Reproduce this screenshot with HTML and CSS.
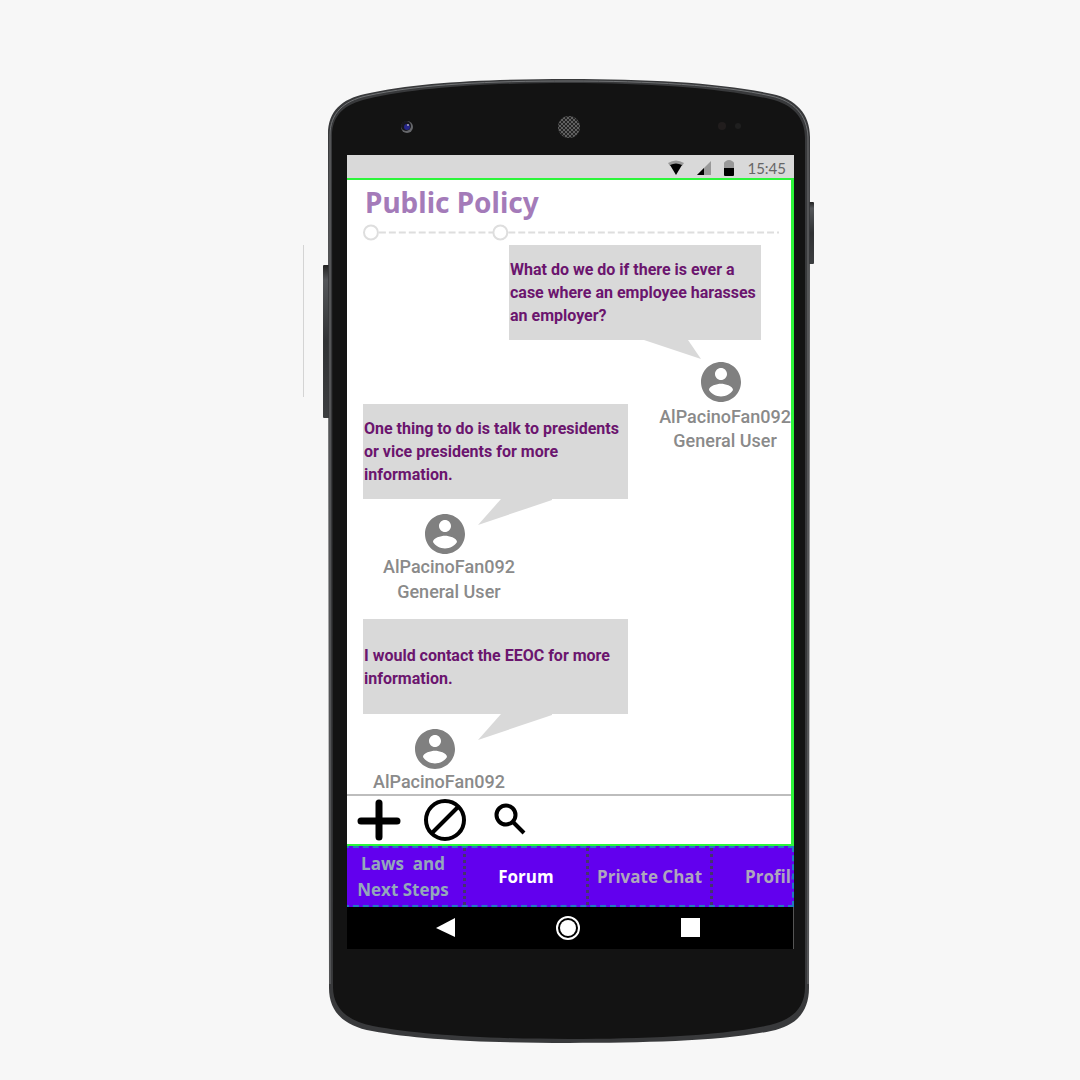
FILE: index.html
```html
<!DOCTYPE html>
<html lang="en">
<head>
<meta charset="utf-8">
<meta name="viewport" content="width=device-width, initial-scale=1">
<title>Public Policy</title>
<link rel="stylesheet" href="styles.css">
</head>
<body>
<svg class="defs" aria-hidden="true">
  <symbol id="avatar" viewBox="2 2 20 20"><path fill="currentColor" d="M12 2C6.480 2 2 6.480 2 12s4.480 10 10 10 10-4.480 10-10S17.520 2 12 2zm0 3c1.660 0 3 1.340 3 3s-1.340 3-3 3-3-1.340-3-3 1.340-3 3-3zm0 14.200c-2.500 0-4.710-1.280-6-3.220.030-1.990 4-3.080 6-3.080 1.990 0 5.970 1.090 6 3.080-1.290 1.940-3.500 3.220-6 3.220z"/></symbol>
</svg>
<main class="stage">
  <span class="side-line"></span>
  <div class="phone">
    <svg class="case" viewBox="0 0 492 965" preserveAspectRatio="none" aria-hidden="true">
      <defs>
        <linearGradient id="key" x1="0" x2="0" y1="0" y2="1"><stop offset="0" stop-color="#222"/><stop offset=".1" stop-color="#55575a"/><stop offset=".5" stop-color="#303234"/><stop offset="1" stop-color="#3c3e40"/></linearGradient>
        <pattern id="mesh" width="4" height="4" patternUnits="userSpaceOnUse"><circle cx="1" cy="1" r="1" fill="#111"/><circle cx="3" cy="3" r="1" fill="#111"/></pattern>
      </defs>
      <rect x="0" y="186" width="8" height="153" rx="1" fill="url(#key)"/>
      <rect x="484" y="123" width="7" height="62" rx="1" fill="url(#key)"/>
      <path fill="#38393b" d="M5 55C5 32 19 20 42 15C95 3 168 0 246 0C326 0 399 4 449 15C473 20 487 35 487 58L486 909C486 933 473 947 448 952C400 962 322 964 246 964C168 964 96 961 49 952C20 947 6 932 6 909Z"/>
      <path fill="none" stroke="#717375" stroke-width="1" d="M7 70V56C7 34 21 22 43 17C96 5 168 2 246 2C326 2 399 6 448 17C471 22 484 36 485 58V905M7 70V905"/>
      <path fill="#131313" d="M9 57C9 36 22 25 44 20C96 8 168 4 246 4C326 4 397 9 447 20C469 25 482 38 482 59L482 908C482 929 469 941 447 946C399 957 321 960 246 960C169 960 97 956 50 947C24 942 10 929 10 908Z"/>
      <circle cx="84" cy="48" r="6" fill="#66676b"/><circle cx="83" cy="47" r="5" fill="#17171c"/><circle cx="84" cy="48" r="3" fill="#26268a"/><circle cx="85" cy="46" r="1" fill="#aab"/>
      <circle cx="246" cy="48" r="11" fill="#606060"/><circle cx="246" cy="48" r="11" fill="url(#mesh)"/>
      <circle cx="399" cy="47" r="4" fill="#211d1d"/><circle cx="415" cy="47" r="3" fill="#1f1f1f"/>
    </svg>
    <div class="screen">
      <div class="status">
        <svg width="16" height="15" viewBox="0 0 16 15" aria-hidden="true"><path fill="#999" d="M0 3Q8-2 16 3L14 6H2Z"/><path fill="#000" d="M2 5Q8 2 14 5L8 15Z"/></svg>
        <svg width="14" height="14" viewBox="0 0 14 14" aria-hidden="true"><path fill="#999" d="M0 14L14 0V14Z"/><path fill="#000" d="M0 14L7 7V14Z"/></svg>
        <svg width="10" height="16" viewBox="0 0 10 16" aria-hidden="true"><path fill="#999" d="M0 8V3Q0 2 2 1Q3 0 5 0T8 1Q10 2 10 3V8Z"/><path fill="#000" d="M0 8H10V15Q10 16 9 16H1Q0 16 0 15Z"/></svg>
        <time>15:45</time>
      </div>
      <div class="app">
        <section class="feed">
          <header class="heading">
            <h1>Public Policy</h1>
            <svg class="rule" viewBox="0 0 418 17" preserveAspectRatio="xMinYMid meet" aria-hidden="true"><path d="M16 8.500H418" stroke="#dedede" stroke-width="2" stroke-dasharray="7 3"/><circle cx="8" cy="8.500" r="7" fill="#fff" stroke="#dedede" stroke-width="2"/><circle cx="138" cy="8.500" r="7" fill="#fff" stroke="#dedede" stroke-width="2"/></svg>
          </header>
          <article class="message mine">
            <p class="bubble">What do we do if there is ever a case where an employee harasses an employer?
              <svg class="tail" width="57" height="19" viewBox="0 0 57 19" aria-hidden="true"><path d="M0 0H44L57 19Z"/></svg></p>
            <div class="author"><svg class="avatar"><use href="#avatar"/></svg><span>AlPacinoFan092</span><span>General User</span></div>
          </article>
          <article class="message second">
            <p class="bubble">One thing to do is talk to presidents or vice presidents for more information.
              <svg class="tail" width="74" height="26" viewBox="0 0 74 26" aria-hidden="true"><path d="M23 0H74V1L0 26Z"/></svg></p>
            <div class="author"><svg class="avatar"><use href="#avatar"/></svg><span>AlPacinoFan092</span><span>General User</span></div>
          </article>
          <article class="message third">
            <p class="bubble">I would contact the EEOC for more information.
              <svg class="tail" width="74" height="26" viewBox="0 0 74 26" aria-hidden="true"><path d="M23 0H74V1L0 26Z"/></svg></p>
            <div class="author"><svg class="avatar"><use href="#avatar"/></svg><span>AlPacinoFan092</span></div>
          </article>
        </section>
        <div class="tools">
          <button type="button" aria-label="Add"><svg width="44" height="44" viewBox="0 0 44 44"><path d="M22 5V39M4 23H40" fill="none" stroke="#000" stroke-width="7" stroke-linecap="round"/></svg></button>
          <button type="button" aria-label="Block"><svg width="44" height="44" viewBox="0 0 44 44"><g fill="none" stroke="#000" stroke-width="4"><circle cx="22" cy="22" r="19"/><path d="M9 35L35 9"/></g></svg></button>
          <button type="button" aria-label="Search"><svg width="44" height="44" viewBox="0 0 44 44"><g fill="none" stroke="#000" stroke-width="4"><circle cx="17" cy="17" r="9.500"/><path d="M24 24L35 35"/></g></svg></button>
        </div>
      </div>
      <nav class="tabs">
        <a class="laws" href="#laws">Laws&nbsp; and Next Steps</a>
        <a class="current" href="#forum">Forum</a>
        <a href="#chat">Private Chat</a>
        <a href="#profile">Profile</a>
      </nav>
      <div class="system">
        <button type="button" aria-label="Back"><svg width="24" height="24" viewBox="0 0 24 24"><path fill="#fff" d="M3 12L22 2V21Z"/></svg></button>
        <button type="button" aria-label="Home"><svg width="24" height="24" viewBox="0 0 24 24"><circle cx="12" cy="12" r="11" fill="none" stroke="#fff" stroke-width="2"/><circle cx="12" cy="12" r="8" fill="#fff"/></svg></button>
        <button type="button" aria-label="Recent apps"><svg width="24" height="24" viewBox="0 0 24 24"><path fill="#fff" d="M3 2H22V21H3Z"/></svg></button>
      </div>
    </div>
  </div>
</main>
</body>
</html>
```
FILE: styles.css
```css
* { box-sizing: border-box; }
body { margin: 0; min-height: 100vh; background: #f7f7f7; font-family: Roboto, Arial, sans-serif; }
.defs { position: absolute; width: 0; height: 0; }
svg { display: block; }
button { display: flex; border: 0; padding: 0; background: none; }
.stage { display: flex; justify-content: center; padding: 79px 0 36px 38px; }
.side-line { width: 1px; height: 152px; margin: 166px 19px 0 0; background: #d4d4d4; }
.phone { position: relative; width: 100%; max-width: 492px; padding: 76px 21px 95px 24px; }
.case { position: absolute; inset: 0; width: 100%; height: 100%; }
.screen { position: relative; overflow: hidden; background: #fff; }

.status { display: flex; align-items: center; justify-content: flex-end; gap: 13px; height: 23px; padding: 2px 8px 0 0; background: #d9d9d9; color: #666; }
.status time { font: 15px/20px Lato, sans-serif; }

.app { border: solid #2cf53a; border-width: 2px 3px 2px 0; }
.feed { padding: 0 0 0 16px; overflow: hidden; }
.heading { height: 65px; padding: 3px 12px 0 0; }
h1 { margin: 0 2px 3px; color: #a47bb9; font: bold 28px/38px "Noto Sans", sans-serif; }
.rule { width: 100%; height: 17px; }

.message { display: flex; flex-direction: column; align-items: flex-start; }
.bubble { position: relative; display: flex; align-items: center; width: 265px; height: 95px; margin: 0; padding: 0 4px 0 1px; background: #d9d9d9; color: #6b156e; font: bold 16px/23px Roboto, sans-serif; }
.tail { position: absolute; top: 100%; left: 115px; fill: #d9d9d9; }
.author { display: flex; flex-direction: column; align-items: center; margin: 15px 0 0 20px; color: #8a8a8a; font: 500 18px/25px Roboto, sans-serif; }
.avatar { width: 40px; height: 40px; margin: 0 8px 0 0; color: #808080; }
.mine { align-items: flex-end; }
.mine .bubble { width: 252px; margin-right: 30px; }
.mine .tail { left: 135px; }
.mine .author { margin: 22px 0 0; line-height: 24px; }
.mine .avatar { margin-bottom: 3px; }
.second { margin-top: -49px; }
.third { margin-top: 15px; }
.third .author { margin-left: 10px; }

.tools { display: flex; align-items: center; gap: 22px; height: 50px; padding-left: 10px; border-top: 2px solid #bdbdbd; }

.tabs { display: flex; height: 61px; margin-left: -4px; background: #6200ee; border: dashed #217bc0; border-width: 2px 2px 2px 0; overflow: hidden; }
.tabs a { flex: 0 0 123px; display: flex; align-items: center; justify-content: center; text-align: center; padding: 0 8px; border-right: 3px dotted #45336d; color: #aea6bd; font: bold 17px/26px "Open Sans", sans-serif; text-decoration: none; white-space: nowrap; }
.tabs .laws { white-space: normal; color: #94a8ba; }
.tabs .current { color: #fff; }

.system { display: flex; justify-content: space-between; align-items: center; height: 42px; padding: 0 91px 0 86px; background: #000; border-right: 1px solid #555; }
```
